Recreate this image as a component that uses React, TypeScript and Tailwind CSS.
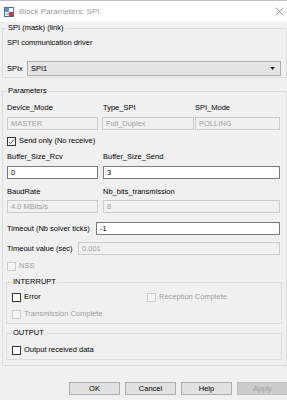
import clsx from 'clsx';

function Field({ value, disabled, className }: { value: string; disabled?: boolean; className?: string }) {
  return (
    <div
      className={clsx(
        'flex h-[13px] shrink-0 items-center border px-[3px] leading-none',
        disabled ? 'border-[#cccccc] bg-[#f0f0f0] text-[#a0a0a0]' : 'border-[#7a7a7a] bg-white text-black',
        className
      )}
    >
      {value}
    </div>
  );
}

function Check({ label, checked, disabled, className }: { label: string; checked?: boolean; disabled?: boolean; className?: string }) {
  return (
    <div className={clsx('flex h-[12px] items-center gap-[3px]', className)}>
      <span
        className={clsx(
          'flex h-[9px] w-[9px] shrink-0 items-center justify-center border',
          disabled ? 'border-[#cccccc] bg-[#f5f5f5]' : 'border-[#333333] bg-white'
        )}
      >
        {checked && (
          <svg viewBox="0 0 9 9" className="h-[7px] w-[7px]">
            <path d="M1 4.5 L3.5 7 L8 1.5" stroke="#222" fill="none" strokeWidth="1" />
          </svg>
        )}
      </span>
      <span className={disabled ? 'text-[#a0a0a0]' : 'text-black'}>{label}</span>
    </div>
  );
}

function Button({ label, disabled }: { label: string; disabled?: boolean }) {
  return (
    <div
      className={clsx(
        'flex h-[13px] w-[51px] shrink-0 items-center justify-center border',
        disabled ? 'border-[#bfbfbf] bg-[#cccccc] text-[#a0a0a0]' : 'border-[#adadad] bg-[#e1e1e1] text-black'
      )}
    >
      {label}
    </div>
  );
}

export default function App() {
  return (
    <div className="h-[400px] w-[287px] overflow-hidden bg-[#f0f0f0] font-['Liberation_Sans',Arial,sans-serif] text-[7.5px] leading-[10px] text-black">
      {/* title bar */}
      <div className="flex h-[22px] items-center border-t border-[#bdbdbd] bg-white pl-[4px] pr-[3px]">
        <svg viewBox="0 0 10 10" className="h-[10px] w-[10px]">
          <rect x="0.5" y="0.5" width="9" height="9" fill="#ffffff" stroke="#4a6fa5" />
          <rect x="1" y="1" width="4" height="4" fill="#6a8fc5" />
          <path d="M2 7 H5" stroke="#4a6fa5" strokeWidth="1" />
          <rect x="5" y="5" width="4" height="4" fill="#d9342b" />
        </svg>
        <span className="ml-[5px] text-[8px] text-[#999999]">Block Parameters: SPI</span>
        <svg viewBox="0 0 9 9" className="ml-auto h-[9px] w-[9px]">
          <path d="M0.5 0.5 L8.5 8.5 M8.5 0.5 L0.5 8.5" stroke="#8a8a8a" strokeWidth="0.8" />
        </svg>
      </div>

      {/* mask group */}
      <fieldset className="ml-[2px] mt-[1px] w-[285px] border border-[#dcdcdc] pb-[1px] pl-[3px] pr-[5px]">
        <legend className="px-[2px] leading-[10px]">SPI (mask) (link)</legend>
        <div className="mt-[5px] pl-[1px]">SPI communication driver</div>
        <div className="mt-[13px] flex h-[15px] items-center pl-[1px]">
          <span className="w-[20px]">SPIx</span>
          <div className="flex h-[15px] flex-1 items-center border border-[#adadad] bg-[#e5e5e5] pl-[3px] pr-[5px]">
            <span>SPI1</span>
            <svg viewBox="0 0 6 4" className="ml-auto h-[3px] w-[5px]">
              <path d="M0 0 H6 L3 4 Z" fill="#111" />
            </svg>
          </div>
        </div>
      </fieldset>

      {/* parameters group */}
      <fieldset className="ml-[2px] mt-[8px] w-[285px] border border-[#dcdcdc] pb-[5px] pl-[4px] pr-[4px]">
        <legend className="px-[1px] leading-[10px]">Parameters</legend>

        <div className="mt-[7px] flex">
          <span className="w-[96px]">Device_Mode</span>
          <span className="w-[92px]">Type_SPI</span>
          <span>SPI_Mode</span>
        </div>
        <div className="mt-[4px] flex">
          <Field value="MASTER" disabled className="w-[91px]" />
          <Field value="Full_Duplex" disabled className="ml-[4px] w-[92px]" />
          <Field value="POLLING" disabled className="ml-[1px] w-[85px]" />
        </div>

        <Check label="Send only (No receive)" checked className="mt-[5px]" />

        <div className="mt-[5px] flex">
          <span className="w-[96px]">Buffer_Size_Rcv</span>
          <span>Buffer_Size_Send</span>
        </div>
        <div className="mt-[4px] flex">
          <Field value="0" className="w-[91px]" />
          <Field value="3" className="ml-[5px] w-[177px]" />
        </div>

        <div className="mt-[8px] flex">
          <span className="w-[96px]">BaudRate</span>
          <span>Nb_bits_transmission</span>
        </div>
        <div className="mt-[3px] flex">
          <Field value="4.0 MBits/s" disabled className="w-[91px]" />
          <Field value="8" disabled className="ml-[5px] w-[177px]" />
        </div>

        <div className="mt-[9px] flex items-center">
          <span className="w-[89px]">Timeout (Nb solver ticks)</span>
          <Field value="-1" className="w-[184px]" />
        </div>
        <div className="mt-[7px] flex items-center">
          <span className="w-[71px]">Timeout value (sec)</span>
          <Field value="0.001" disabled className="w-[202px]" />
        </div>

        <Check label="NSS" disabled className="mt-[5px]" />

        <fieldset className="-ml-px mt-[5px] w-[276px] border border-[#dcdcdc] pb-[3px] pl-[5px]">
          <legend className="px-[1px] leading-[10px]">INTERRUPT</legend>
          <div className="mt-[4px] flex">
            <Check label="Error" className="w-[135px]" />
            <Check label="Reception Complete" disabled />
          </div>
          <Check label="Transmission Complete" disabled className="mt-[5px]" />
        </fieldset>

        <fieldset className="-ml-px mt-[4px] w-[276px] border border-[#dcdcdc] pb-[3px] pl-[5px]">
          <legend className="px-[1px] leading-[10px]">OUTPUT</legend>
          <Check label="Output received data" className="mt-[6px]" />
        </fieldset>
      </fieldset>

      {/* buttons */}
      <div className="ml-[69px] mt-[16px] flex gap-[5px]">
        <Button label="OK" />
        <Button label="Cancel" />
        <Button label="Help" />
        <Button label="Apply" disabled />
      </div>
    </div>
  );
}
